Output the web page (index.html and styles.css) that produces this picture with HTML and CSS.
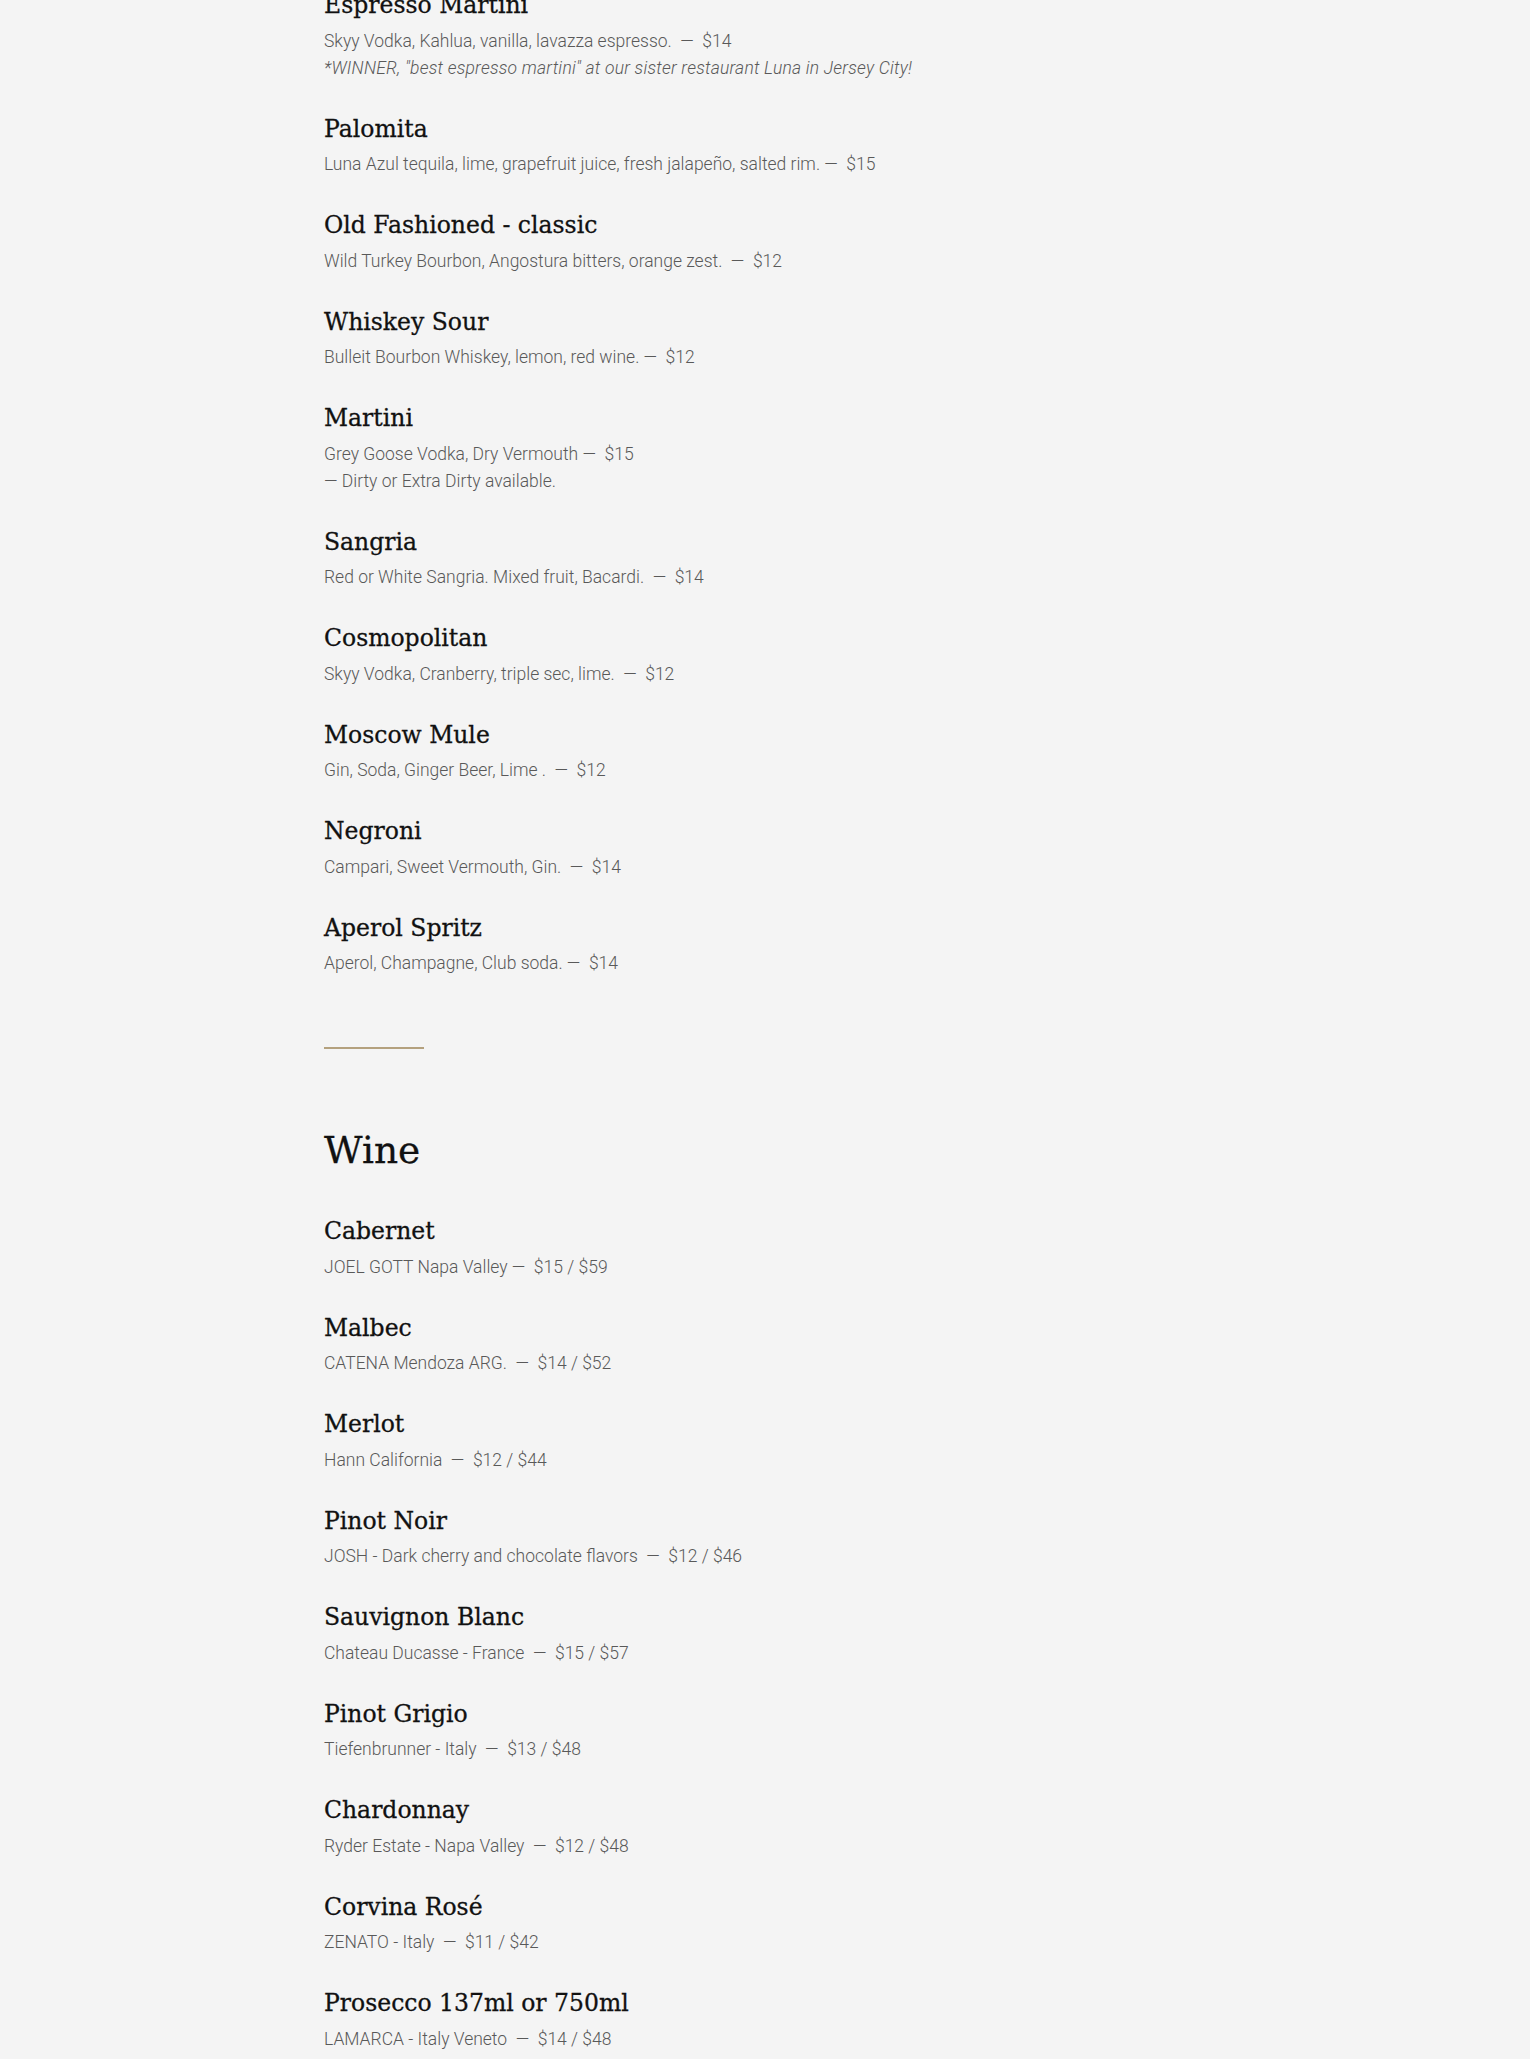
FILE: index.html
```html
<!DOCTYPE html>
<html lang="en">
<head>
<meta charset="utf-8">
<title>Menu</title>
<link rel="stylesheet" href="styles.css">
</head>
<body>
<main class="menu">
  <section class="section section-cocktails">
    <div class="item">
      <h3 class="item-name">Espresso Martini</h3>
      <p class="item-desc">Skyy Vodka, Kahlua, vanilla, lavazza espresso.&nbsp; —&nbsp; $14<br><em>*WINNER, "best espresso martini" at our sister restaurant Luna in Jersey City!</em></p>
    </div>
    <div class="item">
      <h3 class="item-name">Palomita</h3>
      <p class="item-desc">Luna Azul tequila, lime, grapefruit juice, fresh jalapeño, salted rim. —&nbsp; $15</p>
    </div>
    <div class="item">
      <h3 class="item-name">Old Fashioned - classic</h3>
      <p class="item-desc">Wild Turkey Bourbon, Angostura bitters, orange zest.&nbsp; —&nbsp; $12</p>
    </div>
    <div class="item">
      <h3 class="item-name">Whiskey Sour</h3>
      <p class="item-desc">Bulleit Bourbon Whiskey, lemon, red wine. —&nbsp; $12</p>
    </div>
    <div class="item">
      <h3 class="item-name">Martini</h3>
      <p class="item-desc">Grey Goose Vodka, Dry Vermouth —&nbsp; $15<br>— Dirty or Extra Dirty available.</p>
    </div>
    <div class="item">
      <h3 class="item-name">Sangria</h3>
      <p class="item-desc">Red or White Sangria. Mixed fruit, Bacardi.&nbsp; —&nbsp; $14</p>
    </div>
    <div class="item">
      <h3 class="item-name">Cosmopolitan</h3>
      <p class="item-desc">Skyy Vodka, Cranberry, triple sec, lime.&nbsp; —&nbsp; $12</p>
    </div>
    <div class="item">
      <h3 class="item-name">Moscow Mule</h3>
      <p class="item-desc">Gin, Soda, Ginger Beer, Lime .&nbsp; —&nbsp; $12</p>
    </div>
    <div class="item">
      <h3 class="item-name">Negroni</h3>
      <p class="item-desc">Campari, Sweet Vermouth, Gin.&nbsp; —&nbsp; $14</p>
    </div>
    <div class="item">
      <h3 class="item-name">Aperol Spritz</h3>
      <p class="item-desc">Aperol, Champagne, Club soda. —&nbsp; $14</p>
    </div>
  </section>

  <hr class="divider">

  <section class="section section-wine">
    <h2 class="section-title">Wine</h2>
    <div class="item">
      <h3 class="item-name">Cabernet</h3>
      <p class="item-desc">JOEL GOTT Napa Valley —&nbsp; $15 / $59</p>
    </div>
    <div class="item">
      <h3 class="item-name">Malbec</h3>
      <p class="item-desc">CATENA Mendoza ARG.&nbsp; —&nbsp; $14 / $52</p>
    </div>
    <div class="item">
      <h3 class="item-name">Merlot</h3>
      <p class="item-desc">Hann California&nbsp; —&nbsp; $12 / $44</p>
    </div>
    <div class="item">
      <h3 class="item-name">Pinot Noir</h3>
      <p class="item-desc">JOSH - Dark cherry and chocolate flavors&nbsp; —&nbsp; $12 / $46</p>
    </div>
    <div class="item">
      <h3 class="item-name">Sauvignon Blanc</h3>
      <p class="item-desc">Chateau Ducasse - France&nbsp; —&nbsp; $15 / $57</p>
    </div>
    <div class="item">
      <h3 class="item-name">Pinot Grigio</h3>
      <p class="item-desc">Tiefenbrunner - Italy&nbsp; —&nbsp; $13 / $48</p>
    </div>
    <div class="item">
      <h3 class="item-name">Chardonnay</h3>
      <p class="item-desc">Ryder Estate - Napa Valley&nbsp; —&nbsp; $12 / $48</p>
    </div>
    <div class="item">
      <h3 class="item-name">Corvina Rosé</h3>
      <p class="item-desc">ZENATO - Italy&nbsp; —&nbsp; $11 / $42</p>
    </div>
    <div class="item">
      <h3 class="item-name">Prosecco 137ml or 750ml</h3>
      <p class="item-desc">LAMARCA - Italy Veneto&nbsp; —&nbsp; $14 / $48</p>
    </div>
  </section>
</main>
</body>
</html>
```

FILE: styles.css
```css
html, body {
  margin: 0;
  padding: 0;
  background: #f4f4f4;
}

body {
  font-family: Roboto, "Liberation Sans", sans-serif;
  color: #111;
}

.menu {
  max-width: 882px;
  margin: -9px auto 0;
  padding: 0;
}

.section {
  display: flex;
  flex-direction: column;
  gap: 32.8px;
}

.item {
  display: flex;
  flex-direction: column;
  gap: 8.5px;
}

.item-name {
  margin: 0;
  font-family: "DejaVu Serif", "Liberation Serif", serif;
  font-weight: normal;
  font-size: 23.5px;
  line-height: 28px;
  color: #111;
  -webkit-text-stroke: 0.3px #111;
}

.item-desc {
  margin: 0;
  font-family: Roboto, "Liberation Sans", sans-serif;
  font-weight: 300;
  font-size: 17.5px;
  line-height: 27.2px;
  color: #595959;
}

.item-desc em {
  font-style: italic;
  letter-spacing: 0.22px;
}

.divider {
  width: 100px;
  height: 2px;
  margin: 69.5px 0 79.3px;
  border: 0;
  background: #b4a17e;
}

.section-title {
  margin: 0 0 11.8px;
  font-family: "DejaVu Serif", "Liberation Serif", serif;
  font-weight: normal;
  font-size: 37.5px;
  line-height: 44px;
  color: #111;
  -webkit-text-stroke: 0.3px #111;
}
```
